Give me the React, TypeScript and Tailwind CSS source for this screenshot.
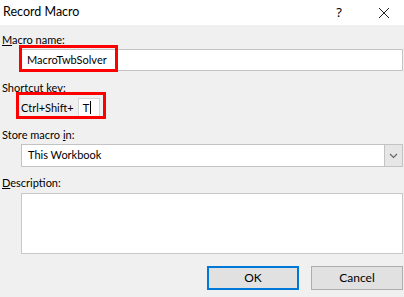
import React from "react";

export default function App() {
  return (
    <div className="relative w-[404px] h-[297px] overflow-hidden bg-[#f0f0f0] text-black font-['Lato',sans-serif]">
      <div className="h-[25px] bg-white flex items-center justify-between">
        <span className="pl-[3px] text-[12.5px] leading-none">Record Macro</span>
        <div className="flex items-center h-full">
          <span className="text-[13px] leading-none mr-[36px] font-['Noto_Sans',sans-serif]">?</span>
          <svg width="12" height="12" viewBox="0 0 12 12" className="mr-[14px]">
            <path d="M1 1 L11 11 M11 1 L1 11" stroke="#222" strokeWidth="1" fill="none" />
          </svg>
        </div>
      </div>

      <div className="flex flex-col pl-[2px] text-[11px]">
        <div className="mt-[7px] h-[16px] leading-[16px]">
          <span className="underline">M</span>acro name:
        </div>
        <div className="mt-[1px] ml-[19px] mr-[1px] h-[22px] bg-white border border-[#c3c3c3] flex items-center pl-[5px]">
          MacroTwbSolver
        </div>

        <div className="mt-[9px] h-[16px] leading-[16px]">
          Shortcut <span className="underline">k</span>ey:
        </div>
        <div className="mt-[1px] ml-[19px] h-[21px] flex items-center">
          <span className="leading-none">Ctrl+Shift+</span>
          <div className="ml-[4px] w-[22px] h-[19px] bg-white border border-[#d4d4d4] flex items-center pl-[4px]">
            <span className="leading-none">T</span>
            <span className="w-[1px] h-[13px] bg-black ml-[1px]" />
          </div>
        </div>

        <div className="mt-[9px] h-[16px] leading-[16px]">
          Store macro <span className="underline">i</span>n:
        </div>
        <div className="mt-[1px] ml-[19px] mr-[1px] h-[23px] bg-white border border-[#c3c3c3] flex items-stretch">
          <div className="flex-1 flex items-center pl-[6px]">This Workbook</div>
          <div className="w-[18px] bg-[#e6e6e6] border-l border-[#c3c3c3] flex items-center justify-center">
            <svg width="9" height="6" viewBox="0 0 9 6">
              <path d="M1 1 L4.5 4.5 L8 1" stroke="#666" strokeWidth="1.2" fill="none" />
            </svg>
          </div>
        </div>

        <div className="mt-[8px] h-[16px] leading-[16px]">
          <span className="underline">D</span>escription:
        </div>
        <div className="mt-[2px] ml-[19px] mr-[1px] h-[61px] bg-white border border-[#c8c8c8]" />

        <div className="mt-[12px] flex justify-end gap-[12px] mr-[1px]">
          <button className="w-[92px] h-[24px] bg-[#e1e1e1] border-2 border-[#0078d7] text-[12px] leading-none">
            OK
          </button>
          <button className="w-[92px] h-[24px] bg-[#e1e1e1] border border-[#adadad] text-[12px] leading-none">
            Cancel
          </button>
        </div>
      </div>

      <div className="absolute left-[19px] top-[45px] w-[99px] h-[27px] border-[3px] border-[#ff0000]" />
      <div className="absolute left-[16px] top-[92px] w-[90px] h-[27px] border-[3px] border-[#ff0000]" />
    </div>
  );
}
